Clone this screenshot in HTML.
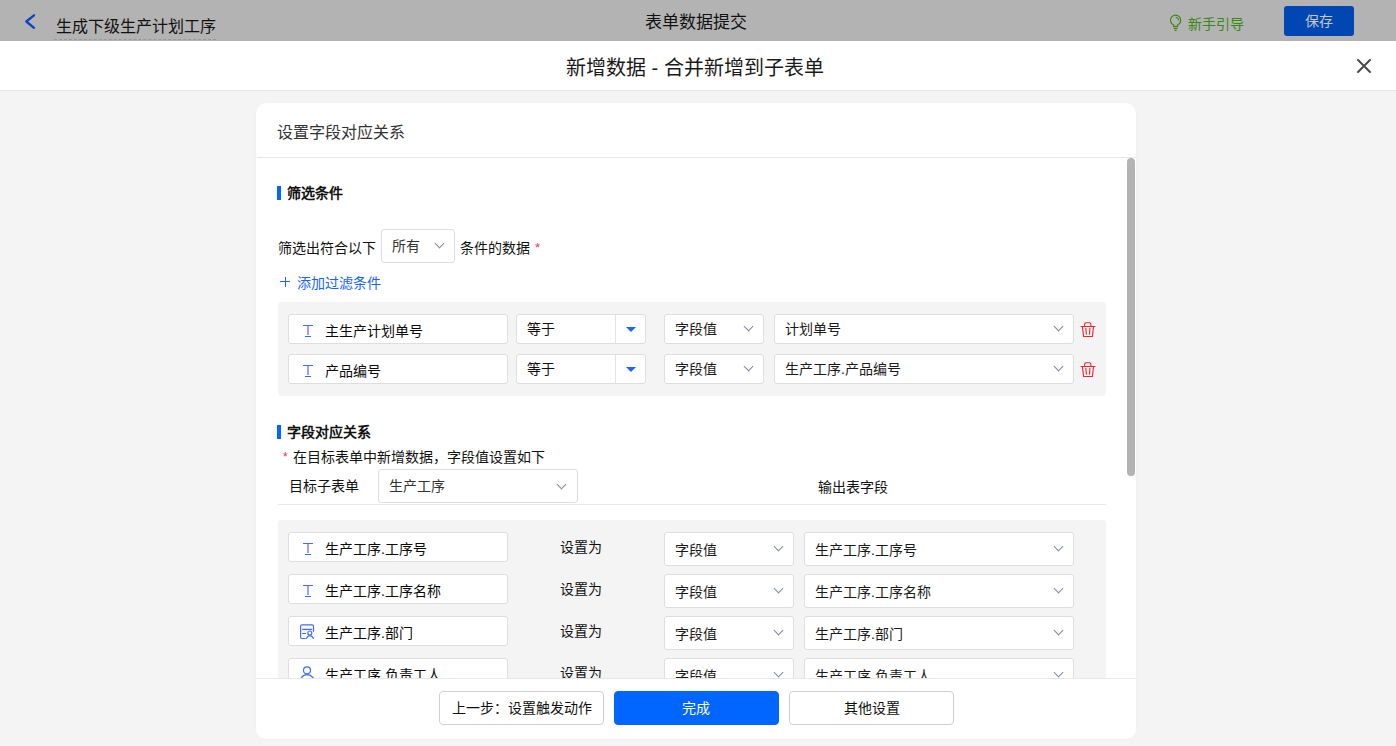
<!DOCTYPE html>
<html lang="zh-CN"><head><meta charset="utf-8">
<style>
*{box-sizing:border-box;margin:0;padding:0}
html,body{width:1396px;height:746px;overflow:hidden}
body{position:relative;background:#f4f4f4;font-family:"Liberation Sans",sans-serif;color:#1f1f1f;font-size:14px}
.abs{position:absolute;white-space:nowrap}
#topbar{position:absolute;left:0;top:0;width:1396px;height:41px;background:#b3b3b3}
#mhead{position:absolute;left:0;top:41px;width:1396px;height:50px;background:#fff;border-bottom:1px solid #e6e6e6}
#card{position:absolute;left:256px;top:103px;width:880px;height:636px;background:#fff;border-radius:10px;overflow:hidden;box-shadow:0 0 1px rgba(0,0,0,.08)}
.t16{font-size:16px;line-height:20px}
.t14{font-size:14px;line-height:18px}
.box{position:absolute;background:#fff;border:1px solid #dedede;border-radius:3px}
.gray{position:absolute;background:#f4f4f4;border-radius:3px}
.chev{position:absolute;width:7px;height:7px;border-right:1px solid #7f889e;border-bottom:1px solid #7f889e;transform:rotate(45deg)}
.bar{position:absolute;left:21px;width:4px;height:14px;background:#0066ff}
.btn{position:absolute;top:588px;width:165px;height:34px;border:1px solid #cfcfcf;border-radius:4px;background:#fff;text-align:center;line-height:32px;font-size:14px;color:#111}
</style></head><body>

<div id="topbar">
  <svg class="abs" style="left:24px;top:13px" width="13" height="18" viewBox="0 0 13 18"><path d="M10 2.3 L2.3 8.5 L10 14.8" fill="none" stroke="#0a44c2" stroke-width="2.3" stroke-linecap="round" stroke-linejoin="round"/></svg>
  <div class="abs t16" style="left:56px;top:17px;color:#111">生成下级生产计划工序</div>
  <div class="abs" style="left:54px;top:39px;width:162px;border-top:1px dashed #999"></div>
  <div class="abs" style="left:645px;top:12px;font-size:17px;line-height:22px;color:#111">表单数据提交</div>
  <svg class="abs" style="left:1168px;top:13px" width="15" height="19" viewBox="0 0 15 19"><path d="M5.6 13.4 V11.9 C3.6 11 2.5 9.3 2.5 7.2 A5.1 5.1 0 0 1 12.7 7.2 C12.7 9.3 11.6 11 9.6 11.9 V13.4 Z M5.6 15.4 H9.6 M6.5 17.4 H8.7" fill="none" stroke="#398912" stroke-width="1.1"/><path d="M7.8 4.3 A3.4 3.4 0 0 1 10.7 7.4" fill="none" stroke="#398912" stroke-width="1.1"/></svg>
  <div class="abs t14" style="left:1188px;top:15px;color:#398912">新手引导</div>
  <div class="abs" style="left:1284px;top:6px;width:70px;height:30px;background:#0047b3;border-radius:3px;color:#c8c8c8;text-align:center;line-height:30px;font-size:14px">保存</div>
</div>

<div id="mhead">
  <div class="abs" style="left:566px;top:14px;font-size:20px;line-height:26px;color:#1a1a1a">新增数据 - 合并新增到子表单</div>
  <svg class="abs" style="left:1356px;top:17px" width="16" height="16" viewBox="0 0 16 16"><path d="M2 2 L14 14 M14 2 L2 14" stroke="#4a4a4a" stroke-width="2" stroke-linecap="round"/></svg>
</div>

<div id="card">
  <div class="abs t16" style="left:21px;top:20px;color:#333">设置字段对应关系</div>
  <div class="abs" style="left:1px;top:54px;width:879px;border-top:1px solid #e8e8e8"></div>
  <!-- scrollbar -->
  <div class="abs" style="left:871px;top:55px;width:8px;height:318px;background:#b3b3b3;border-radius:4px"></div>

  <!-- 筛选条件 -->
  <div class="bar" style="top:83px"></div>
  <div class="abs t14" style="left:31px;top:81px;font-weight:bold;color:#111">筛选条件</div>

  <div class="abs t14" style="left:22px;top:136px;color:#111">筛选出符合以下</div>
  <div class="box" style="left:125px;top:126px;width:74px;height:34px"></div>
  <div class="abs t14" style="left:136px;top:134px;color:#333">所有</div>
  <div class="chev" style="left:180px;top:137px"></div>
  <div class="abs t14" style="left:204px;top:136px;color:#111">条件的数据 <span style="color:#f0304b;font-size:13px;position:relative;left:1px;top:-1px">*</span></div>

  <div class="abs" style="left:24px;top:178px;width:10px;height:1px;background:#1764ff"></div><div class="abs" style="left:29px;top:174px;width:1px;height:10px;background:#1764ff"></div><div class="abs t14" style="left:41px;top:171px;color:#1764ff">添加过滤条件</div>

  <div class="gray" style="left:22px;top:199px;width:828px;height:94px"></div>
  <!-- filter rows -->
  <div class="box" style="left:32px;top:211px;width:220px;height:30px"></div>
<div class="abs" style="left:47px;top:222px;width:10px;height:1px;background:#3d6dff"></div><div class="abs" style="left:51px;top:223px;width:2px;height:9px;background:#8f8dff;opacity:.85"></div><div class="abs" style="left:49px;top:233px;width:6px;height:1px;background:#2f6bff"></div>
<div class="abs t14" style="left:69px;top:219px;color:#0a0a0a">主生产计划单号</div>
<div class="box" style="left:260px;top:211px;width:130px;height:30px"></div>
<div class="abs" style="left:359px;top:212px;height:28px;border-left:1px solid #e3e3e3"></div>
<div class="abs t14" style="left:271px;top:217px;color:#111">等于</div>
<div class="abs" style="left:370px;top:224px;width:0;height:0;border-left:5px solid transparent;border-right:5px solid transparent;border-top:5px solid #1a66ff"></div>
<div class="box" style="left:408px;top:211px;width:100px;height:30px"></div>
<div class="abs t14" style="left:419px;top:217px;color:#1a1a1a">字段值</div>
<div class="chev" style="left:489px;top:220px"></div>
<div class="box" style="left:518px;top:211px;width:300px;height:30px"></div>
<div class="abs t14" style="left:529px;top:217px;color:#1a1a1a">计划单号</div>
<div class="chev" style="left:799px;top:220px"></div>
<svg class="abs" style="left:824px;top:219px" width="16" height="16" viewBox="0 0 16 16"><path d="M4.6 4.3 V2.2 Q4.6 0.7 6.1 0.7 H9.4 Q10.9 0.7 10.9 2.2 V4.3 M1 4.5 H15 M2.4 4.8 L3.6 14.5 H12.4 L13.5 4.8 M5.8 6.3 L6.4 12.3 M9.9 6.3 L9.5 12.3" stroke="#fa1e28" stroke-width="1.1" fill="none" stroke-linecap="round"/></svg>
<div class="box" style="left:32px;top:251px;width:220px;height:30px"></div>
<div class="abs" style="left:47px;top:262px;width:10px;height:1px;background:#3d6dff"></div><div class="abs" style="left:51px;top:263px;width:2px;height:9px;background:#8f8dff;opacity:.85"></div><div class="abs" style="left:49px;top:273px;width:6px;height:1px;background:#2f6bff"></div>
<div class="abs t14" style="left:69px;top:259px;color:#0a0a0a">产品编号</div>
<div class="box" style="left:260px;top:251px;width:130px;height:30px"></div>
<div class="abs" style="left:359px;top:252px;height:28px;border-left:1px solid #e3e3e3"></div>
<div class="abs t14" style="left:271px;top:257px;color:#111">等于</div>
<div class="abs" style="left:370px;top:264px;width:0;height:0;border-left:5px solid transparent;border-right:5px solid transparent;border-top:5px solid #1a66ff"></div>
<div class="box" style="left:408px;top:251px;width:100px;height:30px"></div>
<div class="abs t14" style="left:419px;top:257px;color:#1a1a1a">字段值</div>
<div class="chev" style="left:489px;top:260px"></div>
<div class="box" style="left:518px;top:251px;width:300px;height:30px"></div>
<div class="abs t14" style="left:529px;top:257px;color:#1a1a1a">生产工序.产品编号</div>
<div class="chev" style="left:799px;top:260px"></div>
<svg class="abs" style="left:824px;top:259px" width="16" height="16" viewBox="0 0 16 16"><path d="M4.6 4.3 V2.2 Q4.6 0.7 6.1 0.7 H9.4 Q10.9 0.7 10.9 2.2 V4.3 M1 4.5 H15 M2.4 4.8 L3.6 14.5 H12.4 L13.5 4.8 M5.8 6.3 L6.4 12.3 M9.9 6.3 L9.5 12.3" stroke="#fa1e28" stroke-width="1.1" fill="none" stroke-linecap="round"/></svg>

  <!-- 字段对应关系 -->
  <div class="bar" style="top:322px"></div>
  <div class="abs t14" style="left:31px;top:320px;font-weight:bold;color:#111">字段对应关系</div>
  <div class="abs t14" style="left:27px;top:345px;color:#f0304b;font-size:12px">*</div><div class="abs t14" style="left:37px;top:345px;color:#111">在目标表单中新增数据，字段值设置如下</div>
  <div class="abs t14" style="left:33px;top:374px;color:#111">目标子表单</div>
  <div class="box" style="left:122px;top:366px;width:200px;height:34px"></div>
  <div class="abs t14" style="left:133px;top:374px;color:#333">生产工序</div>
  <div class="chev" style="left:302px;top:378px"></div>
  <div class="abs t14" style="left:562px;top:375px;color:#111">输出表字段</div>
  <div class="abs" style="left:22px;top:401px;width:828px;border-top:1px solid #e8e8e8"></div>

  <div class="gray" style="left:22px;top:417px;width:828px;height:240px"></div>
  <div class="box" style="left:32px;top:429px;width:220px;height:30px"></div>
<div class="abs" style="left:47px;top:440px;width:10px;height:1px;background:#3d6dff"></div><div class="abs" style="left:51px;top:441px;width:2px;height:9px;background:#8f8dff;opacity:.85"></div><div class="abs" style="left:49px;top:451px;width:6px;height:1px;background:#2f6bff"></div>
<div class="abs t14" style="left:69px;top:437px;color:#0a0a0a">生产工序.工序号</div>
<div class="abs t14" style="left:304px;top:435px;color:#111">设置为</div>
<div class="box" style="left:408px;top:429px;width:130px;height:34px"></div>
<div class="abs t14" style="left:419px;top:438px;color:#1a1a1a">字段值</div>
<div class="chev" style="left:519px;top:440px"></div>
<div class="box" style="left:548px;top:429px;width:270px;height:34px"></div>
<div class="abs t14" style="left:559px;top:438px;color:#1a1a1a">生产工序.工序号</div>
<div class="chev" style="left:799px;top:440px"></div>
<div class="box" style="left:32px;top:471px;width:220px;height:30px"></div>
<div class="abs" style="left:47px;top:482px;width:10px;height:1px;background:#3d6dff"></div><div class="abs" style="left:51px;top:483px;width:2px;height:9px;background:#8f8dff;opacity:.85"></div><div class="abs" style="left:49px;top:493px;width:6px;height:1px;background:#2f6bff"></div>
<div class="abs t14" style="left:69px;top:479px;color:#0a0a0a">生产工序.工序名称</div>
<div class="abs t14" style="left:304px;top:477px;color:#111">设置为</div>
<div class="box" style="left:408px;top:471px;width:130px;height:34px"></div>
<div class="abs t14" style="left:419px;top:480px;color:#1a1a1a">字段值</div>
<div class="chev" style="left:519px;top:482px"></div>
<div class="box" style="left:548px;top:471px;width:270px;height:34px"></div>
<div class="abs t14" style="left:559px;top:480px;color:#1a1a1a">生产工序.工序名称</div>
<div class="chev" style="left:799px;top:482px"></div>
<div class="box" style="left:32px;top:513px;width:220px;height:30px"></div>
<svg class="abs" style="left:43px;top:521px" width="16" height="16" viewBox="0 0 16 16"><path d="M6 14.5 H3 Q1.6 14.5 1.6 13 V2.3 Q1.6 0.8 3 0.8 H13 Q14.5 0.8 14.5 2.3 V7.3 M3.6 5.3 H12.7 M3.6 9.5 H6.7 M7.3 14.5 Q8.8 11.6 10.9 11.6 Q13 11.6 14.5 14.5" stroke="#3f6cff" stroke-width="1.2" fill="none" stroke-linecap="round"/><circle cx="10.8" cy="9" r="2" stroke="#3f6cff" stroke-width="1.2" fill="none"/></svg>
<div class="abs t14" style="left:69px;top:521px;color:#0a0a0a">生产工序.部门</div>
<div class="abs t14" style="left:304px;top:519px;color:#111">设置为</div>
<div class="box" style="left:408px;top:513px;width:130px;height:34px"></div>
<div class="abs t14" style="left:419px;top:522px;color:#1a1a1a">字段值</div>
<div class="chev" style="left:519px;top:524px"></div>
<div class="box" style="left:548px;top:513px;width:270px;height:34px"></div>
<div class="abs t14" style="left:559px;top:522px;color:#1a1a1a">生产工序.部门</div>
<div class="chev" style="left:799px;top:524px"></div>
<div class="box" style="left:32px;top:555px;width:220px;height:30px"></div>
<svg class="abs" style="left:43px;top:562px" width="16" height="18" viewBox="0 0 16 18"><circle cx="8" cy="5.3" r="3.5" stroke="#3f6cff" stroke-width="1.2" fill="none"/><path d="M2.2 12.8 Q4.5 9.6 8 9.6 Q11.5 9.6 14.3 12.8 L15 14" stroke="#3f6cff" stroke-width="1.2" fill="none" stroke-linecap="round"/></svg>
<div class="abs t14" style="left:69px;top:563px;color:#0a0a0a">生产工序.负责工人</div>
<div class="abs t14" style="left:304px;top:561px;color:#111">设置为</div>
<div class="box" style="left:408px;top:555px;width:130px;height:34px"></div>
<div class="abs t14" style="left:419px;top:564px;color:#1a1a1a">字段值</div>
<div class="chev" style="left:519px;top:566px"></div>
<div class="box" style="left:548px;top:555px;width:270px;height:34px"></div>
<div class="abs t14" style="left:559px;top:564px;color:#1a1a1a">生产工序.负责工人</div>
<div class="chev" style="left:799px;top:566px"></div>

  <!-- footer -->
  <div class="abs" style="left:0;top:575px;width:880px;height:61px;background:#fff;border-top:1px solid #e8e8e8"></div>
  <div class="btn" style="left:183px">上一步：设置触发动作</div>
  <div class="btn" style="left:358px;background:#0066ff;border-color:#0066ff;color:#fff;padding-right:2px">完成</div>
  <div class="btn" style="left:533px">其他设置</div>
</div>

</body></html>
